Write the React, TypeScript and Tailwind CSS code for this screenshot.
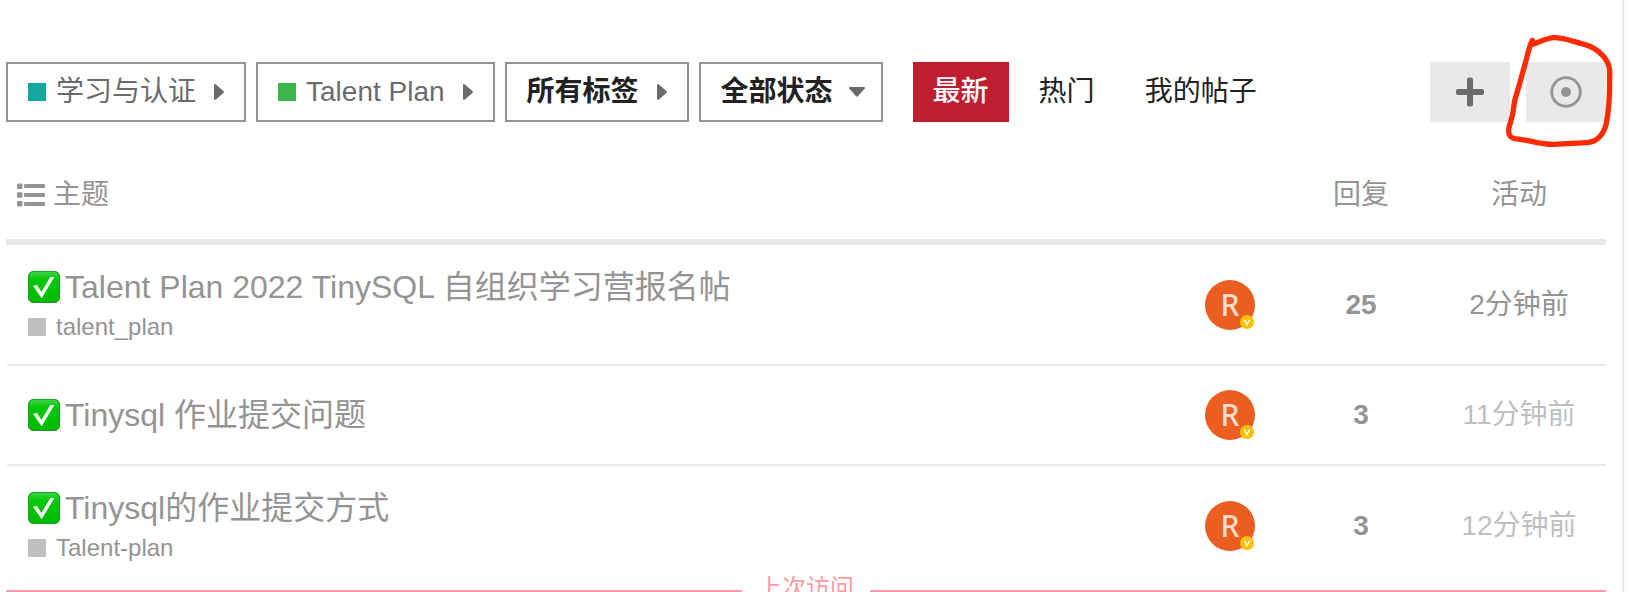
import React from 'react';

interface Topic {
  title: string;
  tag?: string;
  replies: number;
  activity: string;
  recent?: boolean;
}

const topics: Topic[] = [
  { title: 'Talent Plan 2022 TinySQL 自组织学习营报名帖', tag: 'talent_plan', replies: 25, activity: '2分钟前', recent: true },
  { title: 'Tinysql 作业提交问题', replies: 3, activity: '11分钟前' },
  { title: 'Tinysql的作业提交方式', tag: 'Talent-plan', replies: 3, activity: '12分钟前' },
];

const CaretRight = () => (
  <svg viewBox="0 0 10 16" className="w-[10px] h-4 shrink-0" fill="#6b6b6b" aria-hidden="true">
    <path d="M0 1.2C0 .1 1.1-.3 1.9.4l7.5 6.7c.6.5.6 1.3 0 1.8l-7.5 6.7C1.1 16.3 0 15.9 0 14.8z" />
  </svg>
);

const CaretDown = () => (
  <svg viewBox="0 0 16 10" className="w-4 h-[10px] shrink-0" fill="#6b6b6b" aria-hidden="true">
    <path d="M1.2 0C.1 0-.3 1 .4 1.8l6.7 7.4c.5.6 1.3.6 1.8 0l6.7-7.4C16.3 1 15.9 0 14.8 0z" />
  </svg>
);

const PlusIcon = () => (
  <svg viewBox="0 0 28 30" className="w-7 h-[30px]" fill="#6b6b6b" aria-hidden="true">
    <rect x="11" y="0.5" width="6" height="29" rx="2" />
    <rect x="0" y="12" width="28" height="6" rx="2" />
  </svg>
);

const TrackingIcon = () => (
  <svg viewBox="0 0 32 32" className="w-8 h-8" aria-hidden="true">
    <circle cx="16" cy="16" r="14.3" fill="none" stroke="#949494" strokeWidth="2.8" />
    <circle cx="16" cy="16" r="5" fill="#949494" />
  </svg>
);

const ListIcon = () => (
  <svg viewBox="0 0 28 24" className="w-7 h-6" fill="#949494" aria-hidden="true">
    <rect x="0" y="0.5" width="5.5" height="5.5" rx="1" />
    <rect x="0" y="9.2" width="5.5" height="5.5" rx="1" />
    <rect x="0" y="18" width="5.5" height="5.5" rx="1" />
    <rect x="7" y="1" width="21" height="4" rx="1" />
    <rect x="7" y="10" width="21" height="4" rx="1" />
    <rect x="7" y="19" width="21" height="4" rx="1" />
  </svg>
);

const CheckMark = () => (
  <svg viewBox="0 0 96 96" className="w-8 h-8 shrink-0" aria-hidden="true">
    <defs>
      <linearGradient id="checkFill" x1="0" y1="0" x2="0" y2="1">
        <stop offset="0" stopColor="#3fd54a" />
        <stop offset="0.25" stopColor="#06c90c" />
        <stop offset="1" stopColor="#00ba00" />
      </linearGradient>
    </defs>
    <rect x="1" y="1" width="94" height="94" rx="16" fill="url(#checkFill)" stroke="#0a9a1c" strokeWidth="3" />
    <path d="M15 44l12-2 13 21L67 18h12L41 82z" fill="#fff" />
  </svg>
);

const Avatar = () => (
  <a href="#user" className="relative flex size-[50px] items-center justify-center rounded-full bg-[#eb5e22] mx-auto">
    <span className="font-['Noto_Sans'] text-[30px] leading-[50px] font-medium text-[#ffdccb]">R</span>
    <svg viewBox="0 0 14 14" className="absolute right-px bottom-px size-[14px]" aria-hidden="true">
      <circle cx="7" cy="7" r="7" fill="#f8c200" />
      <path d="M4.3 4.7L7 9.6l2.7-4.9" fill="none" stroke="#fff" strokeWidth="1.4" />
    </svg>
  </a>
);

const FilterButton = ({ label, color, down }: { label: string; color?: string; down?: boolean }) => (
  <button
    className={
      'flex h-[60px] items-center border-2 border-[#949494] pl-5 ' +
      (down ? 'gap-4 pr-4 ' : 'gap-[18px] pr-5 ') +
      (color ? 'text-[#6b6b6b]' : 'font-bold text-[#222222]')
    }
  >
    <span className="flex items-center gap-[10px]">
      {color && <span className={'size-[18px] ' + color} />}
      {label}
    </span>
    {down ? <CaretDown /> : <CaretRight />}
  </button>
);

export default function App() {
  return (
    <div className="flex h-screen overflow-hidden bg-white font-['Liberation_Sans','Noto_Sans_CJK_SC',sans-serif] text-[28px] leading-[40px]">
      <main className="min-w-0 flex-1 border-r-2 border-[#e9e9e9] pt-[62px] pr-4 pl-[6px]">
        <div className="flex items-center justify-between">
          <div className="flex items-center gap-[10px] whitespace-nowrap">
            <FilterButton label="学习与认证" color="bg-[#12a89d]" />
            <FilterButton label="Talent Plan" color="bg-[#3ab54a]" />
            <FilterButton label="所有标签" />
            <FilterButton label="全部状态" down />
            <nav className="ml-5 flex gap-[10px] text-[#222222]">
              <a href="#latest" className="flex h-[60px] items-center bg-[#be1e2f] px-5 font-medium text-white">最新</a>
              <a href="#hot" className="flex h-[60px] items-center px-5">热门</a>
              <a href="#mine" className="flex h-[60px] items-center px-5">我的帖子</a>
            </nav>
          </div>
          <div className="flex gap-4">
            <button aria-label="发新帖" className="flex h-[60px] w-20 items-center justify-center bg-[#e9e9e9]">
              <PlusIcon />
            </button>
            <div className="relative">
              <button aria-label="跟踪" className="flex h-[60px] w-20 items-center justify-center bg-[#e9e9e9]">
                <TrackingIcon />
              </button>
              {/* hand-drawn marker round the tracking button */}
              <svg viewBox="372 42 330 342" className="pointer-events-none absolute -top-7 -left-[22px] h-[114px] w-[110px]" aria-hidden="true">
                <path
                  d="M457 61C448 78 444 100 438 122L415 205C408 228 404 235 401 262C399 290 392 304 387 322C383 345 390 353 405 356L440 361C470 367 490 373 520 373L620 368C650 366 668 348 678 315C688 270 690 220 689 150C687 125 672 108 655 94C640 82 625 75 602 70C570 61 545 52 520 53C500 55 480 65 458 73"
                  fill="none"
                  stroke="#ff2a00"
                  strokeWidth="16"
                  strokeLinecap="round"
                  strokeLinejoin="round"
                />
              </svg>
            </div>
          </div>
        </div>

        <table className="mt-7 w-full table-fixed border-separate border-spacing-0 text-[#949494]">
          <thead>
            <tr className="h-[95px] *:border-b-6 *:border-[#e9e9e9] *:p-0 *:font-normal">
              <th>
                <div className="flex items-center gap-2 pl-[11px]">
                  <ListIcon />
                  主题
                </div>
              </th>
              <th className="w-[120px]" aria-label="用户" />
              <th className="w-[142px]">回复</th>
              <th className="w-[174px]">活动</th>
            </tr>
          </thead>
          <tbody>
            {topics.map((topic) => (
              <tr key={topic.title} className="*:border-b-2 *:border-b-[#e9e9e9] *:p-0 text-center">
                <td className="border-l-2 border-l-white">
                  <div className={'pl-5 text-left ' + (topic.tag ? 'pt-[26px] pb-[23px]' : 'py-[33px]')}>
                    <a href="#topic" className="flex h-8 items-center gap-[5px] text-[32px] leading-8">
                      <CheckMark />
                      {topic.title}
                    </a>
                    {topic.tag && (
                      <a href="#tag" className="mt-[10px] flex items-center gap-[10px] text-2xl leading-7">
                        <span className="size-[18px] bg-[#bfbfbf]" />
                        {topic.tag}
                      </a>
                    )}
                  </div>
                </td>
                <td><Avatar /></td>
                <td className="font-bold">{topic.replies}</td>
                <td className={topic.recent ? '' : 'text-[#bfbfbf]'}>{topic.activity}</td>
              </tr>
            ))}
          </tbody>
        </table>
        <div className="relative -mt-[2px] border-b-2 border-[#ff9aa2] bg-white pt-[5px]">
          <span className="absolute -bottom-[14px] left-1/2 -translate-x-1/2 bg-white px-4 text-2xl leading-8 text-[#ff9aa2]">
            上次访问
          </span>
        </div>
      </main>
      <aside className="w-1 bg-[#fafafa]" />
    </div>
  );
}
